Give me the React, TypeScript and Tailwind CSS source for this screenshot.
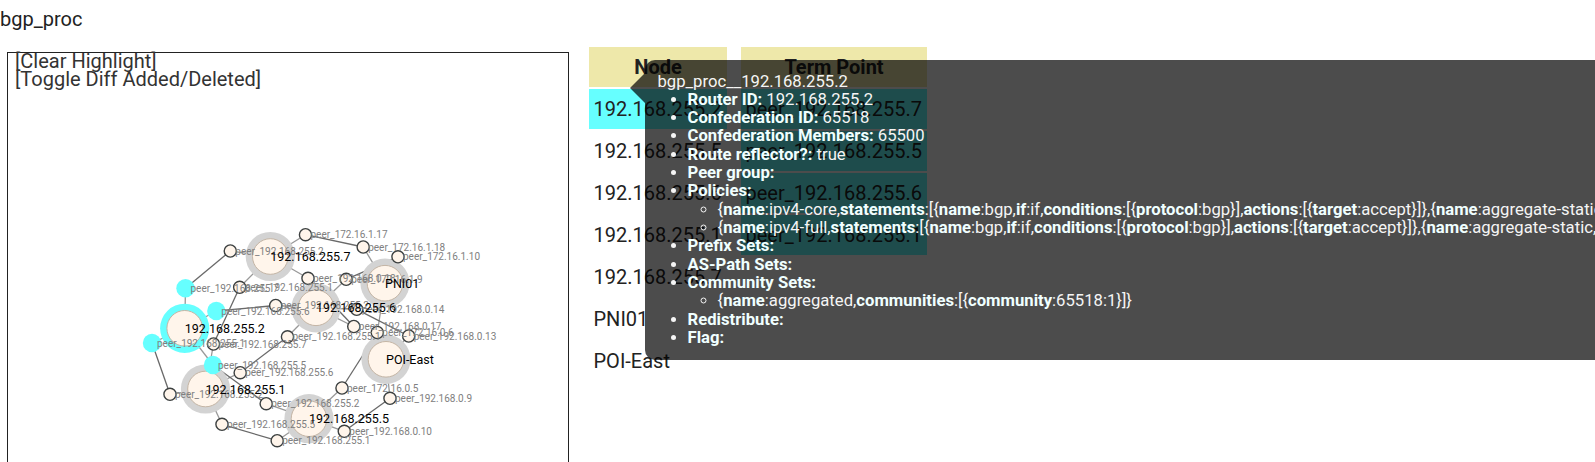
import React from "react";

type Point = [number, number];
type Peer = { at: Point; ip: string; hot?: boolean };
type Router = { at: Point; name: string; hot?: boolean; peers: Peer[] };

const routers: Router[] = [
  {
    at: [270.3, 256.5], name: "192.168.255.7", peers: [
      { at: [230.3, 251], ip: "192.168.255.2" },
      { at: [239.7, 287.3], ip: "192.168.255.1" },
      { at: [308, 278.3], ip: "192.168.0.18" },
      { at: [305.5, 234.7], ip: "172.16.1.17" },
    ],
  },
  {
    at: [184.7, 328.3], name: "192.168.255.2", hot: true, peers: [
      { at: [185.5, 288.3], ip: "192.168.255.7", hot: true },
      { at: [216.3, 311], ip: "192.168.255.6", hot: true },
      { at: [152, 343], ip: "192.168.255.1", hot: true },
      { at: [213, 365], ip: "192.168.255.5", hot: true },
    ],
  },
  {
    at: [316, 307.8], name: "192.168.255.6", peers: [
      { at: [275.7, 305.5], ip: "192.168.255.2" },
      { at: [287.5, 336.8], ip: "192.168.255.1" },
      { at: [346.2, 279.3], ip: "172.16.1.9" },
      { at: [356.7, 309.3], ip: "192.168.0.14" },
      { at: [353.8, 326.5], ip: "192.168.0.17" },
    ],
  },
  {
    at: [205.5, 389], name: "192.168.255.1", peers: [
      { at: [213.5, 344], ip: "192.168.255.7" },
      { at: [240.2, 372.7], ip: "192.168.255.6" },
      { at: [170, 394.3], ip: "192.168.255.2" },
      { at: [222, 424.3], ip: "192.168.255.5" },
    ],
  },
  {
    at: [309, 418.7], name: "192.168.255.5", peers: [
      { at: [266.2, 403.7], ip: "192.168.255.2" },
      { at: [277.2, 440.7], ip: "192.168.255.1" },
      { at: [342, 388], ip: "172.16.0.5" },
      { at: [344.3, 431.3], ip: "192.168.0.10" },
    ],
  },
  {
    at: [385, 283.2], name: "PNI01", peers: [
      { at: [363.2, 247], ip: "172.16.1.18" },
      { at: [398, 256.8], ip: "172.16.1.10" },
      { at: [377.3, 332.5], ip: "172.16.0.6" },
    ],
  },
  {
    at: [386, 359.3], name: "POI-East", peers: [
      { at: [408.7, 336], ip: "192.168.0.13" },
      { at: [390, 398.3], ip: "192.168.0.9" },
    ],
  },
];

const sessions: [Point, Point][] = [
  [[230.3, 251], [185.5, 288.3]],
  [[216.3, 311], [275.7, 305.5]],
  [[239.7, 287.3], [213.5, 344]],
  [[305.5, 234.7], [363.2, 247]],
  [[346.2, 279.3], [398, 256.8]],
  [[308, 278.3], [353.8, 326.5]],
  [[356.7, 309.3], [408.7, 336]],
  [[377.3, 332.5], [342, 388]],
  [[390, 398.3], [344.3, 431.3]],
  [[287.5, 336.8], [240.2, 372.7]],
  [[213, 365], [266.2, 403.7]],
  [[152, 343], [170, 394.3]],
  [[222, 424.3], [277.2, 440.7]],
];

const peers = routers.flatMap((r) => r.peers);

function Topology() {
  return (
    <svg viewBox="8 53 560 500" width={560} height={500} className="block">
      <g stroke="#999" strokeWidth="1.3">
        {routers.flatMap((r) =>
          r.peers.map((p) => (
            <line key={r.name + p.at} x1={r.at[0]} y1={r.at[1]} x2={p.at[0]} y2={p.at[1]} />
          )),
        )}
      </g>
      <g stroke="#696969" strokeWidth="1.3">
        {sessions.map(([a, b]) => (
          <line key={String(a)} x1={a[0]} y1={a[1]} x2={b[0]} y2={b[1]} />
        ))}
      </g>
      {routers.map((r) => (
        <g key={r.name}>
          <circle cx={r.at[0]} cy={r.at[1]} r="24.6" fill={r.hot ? "#66ffff" : "#d3d3d3"} />
          <circle cx={r.at[0]} cy={r.at[1]} r="17.8" fill="#fff5eb" stroke="#c4b5a5" strokeWidth="1" />
        </g>
      ))}
      {peers.map((p) =>
        p.hot ? (
          <circle key={String(p.at)} cx={p.at[0]} cy={p.at[1]} r="9.2" fill="#66ffff" />
        ) : (
          <circle key={String(p.at)} cx={p.at[0]} cy={p.at[1]} r="6.1" fill="#fff5eb" stroke="#3c4040" strokeWidth="1.4" />
        ),
      )}
      <g fontSize="10" fill="#808080">
        {peers.map((p) => (
          <text key={String(p.at)} x={p.at[0] + 5} y={p.at[1] + 3.5}>
            peer_{p.ip}
          </text>
        ))}
      </g>
      <g fontSize="12.5" fill="#000">
        {routers.map((r) => (
          <text key={r.name} x={r.at[0]} y={r.at[1] + 4.5}>
            {r.name}
          </text>
        ))}
      </g>
    </svg>
  );
}

const rows: { node: string; term?: string }[] = [
  { node: "192.168.255.2", term: "peer_192.168.255.7" },
  { node: "192.168.255.5", term: "peer_192.168.255.5" },
  { node: "192.168.255.6", term: "peer_192.168.255.6" },
  { node: "192.168.255.1", term: "peer_192.168.255.1" },
  { node: "192.168.255.7" },
  { node: "PNI01" },
  { node: "POI-East" },
];

function NodeTable() {
  return (
    <div className="grid grid-cols-[138px_186px] auto-rows-[40px] gap-x-3.5 gap-y-0.5 text-xl leading-10">
      <div className="bg-[#eee8aa] text-center font-bold">Node</div>
      <div className="bg-[#eee8aa] text-center font-bold">Term Point</div>
      {rows.map((r, i) => (
        <React.Fragment key={r.node}>
          <div className={i === 0 ? "bg-[#66ffff] px-[4.5px]" : "px-[4.5px]"}>{r.node}</div>
          <div className={r.term ? "bg-[#66ffff] px-[4.5px]" : "px-[4.5px]"}>{r.term}</div>
        </React.Fragment>
      ))}
    </div>
  );
}

function B({ children }: { children: React.ReactNode }) {
  return <span className="font-bold text-[#f0ffff]">{children}</span>;
}

function Policy({ name }: { name: string }) {
  return (
    <li>
      {"{"}<B>name</B>:{name},<B>statements</B>:[{"{"}<B>name</B>:bgp,<B>if</B>:if,<B>conditions</B>:[{"{"}
      <B>protocol</B>:bgp{"}"}],<B>actions</B>:[{"{"}<B>target</B>:accept{"}"}]{"}"},{"{"}<B>name</B>:aggregate-static,
    </li>
  );
}

function Tooltip() {
  return (
    <div className="absolute left-[645px] top-[60px] h-[300px] w-[1100px] whitespace-nowrap rounded-[10px] bg-black/70 p-[12.5px] text-[16.67px] leading-[18.33px] text-[#f5f5f5]">
      <div className="absolute right-full top-[13px] h-[30px] w-[15px] bg-black/70 [clip-path:polygon(100%_0,0_50%,100%_100%)]" />
      <div>bgp_proc__192.168.255.2</div>
      <ul className="list-disc pl-[30px]">
        <li><B>Router ID:</B> 192.168.255.2</li>
        <li><B>Confederation ID:</B> 65518</li>
        <li><B>Confederation Members:</B> 65500</li>
        <li><B>Route reflector?:</B> true</li>
        <li><B>Peer group:</B></li>
        <li>
          <B>Policies:</B>
          <ul className="list-[circle] pl-[30px]">
            <Policy name="ipv4-core" />
            <Policy name="ipv4-full" />
          </ul>
        </li>
        <li><B>Prefix Sets:</B></li>
        <li><B>AS-Path Sets:</B></li>
        <li>
          <B>Community Sets:</B>
          <ul className="list-[circle] pl-[30px]">
            <li>
              {"{"}<B>name</B>:aggregated,<B>communities</B>:[{"{"}<B>community</B>:65518:1{"}"}]{"}"}
            </li>
          </ul>
        </li>
        <li><B>Redistribute:</B></li>
        <li><B>Flag:</B></li>
      </ul>
    </div>
  );
}

export default function App() {
  return (
    <div className="relative flex h-[462px] w-[1595px] flex-col overflow-hidden bg-white font-['Roboto',sans-serif] text-[#222]">
      <h1 className="h-[47px] shrink-0 pt-[7px] text-xl leading-6">bgp_proc</h1>
      <div className="flex items-start">
        <div className="ml-[7px] mt-[5px] h-[520px] w-[562px] shrink-0 border border-[#222]">
          <div className="-mt-px -mb-[35px] h-9 pl-[7px] text-xl leading-[18px] text-[#333]">
            <div>[Clear Highlight]</div>
            <div>[Toggle Diff Added/Deleted]</div>
          </div>
          <Topology />
        </div>
        <div className="ml-5 shrink-0">
          <NodeTable />
        </div>
      </div>
      <Tooltip />
    </div>
  );
}
